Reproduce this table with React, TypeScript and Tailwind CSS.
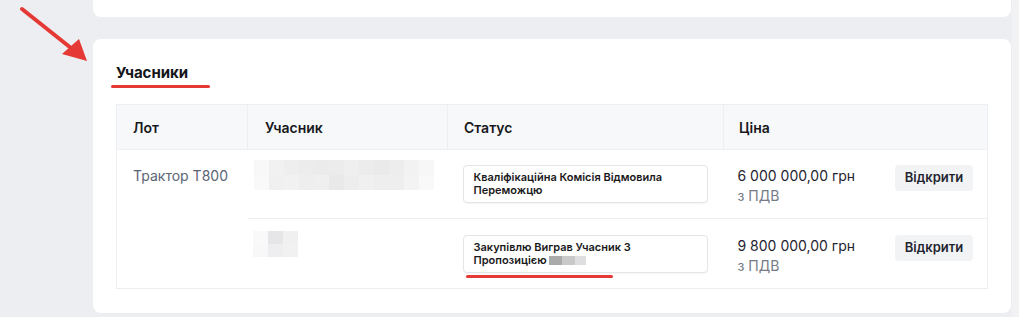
import React from "react";

const blurRow1 = [
  ["#f8f8f8", "#f1f1f2", "#eeeeef", "#ececed", "#ebebec", "#ececed", "#efeff0", "#ececed", "#eaeaeb", "#ededee", "#f2f2f3", "#f7f7f7"],
  ["#f9f9f9", "#f0f0f1", "#f1f1f2", "#eeeeef", "#efeff0", "#e9e9ea", "#ededee", "#f0f0f1", "#eeeeef", "#eeeeef", "#f3f3f4", "#f9f9f9"],
];

const blurRow2 = [
  ["#f9f9f9", "#e6e6e8", "#f0f0f1"],
  ["#f8f8f8", "#eeeef0", "#f1f1f2"],
];

function Pixels({ grid, cell, h }: { grid: string[][]; cell: number; h: number }) {
  return (
    <div className="flex flex-col">
      {grid.map((row, i) => (
        <div key={i} className="flex">
          {row.map((c, j) => (
            <div key={j} style={{ background: c, width: cell, height: h }} />
          ))}
        </div>
      ))}
    </div>
  );
}

function Arrow() {
  return (
    <svg width="93" height="70" viewBox="0 0 93 70" className="block">
      <line x1="22" y1="9" x2="76" y2="52" stroke="#e53935" strokeWidth="4" strokeLinecap="round" />
      <polygon points="87,61 62,54 79,39" fill="#e53935" />
    </svg>
  );
}

function StatusBox({ children }: { children: React.ReactNode }) {
  return (
    <div className="w-[245px] rounded-[4px] border border-[#e3e5e9] bg-white px-[10px] py-[5px] text-[11px] font-semibold leading-[13px] text-[#1a1a1a] shadow-[0_1px_1px_rgba(0,0,0,0.04)]">
      {children}
    </div>
  );
}

function Price({ value }: { value: string }) {
  return (
    <div className="flex items-start justify-between pt-[4px]">
      <div className="leading-[20px]">
        <div className="text-[14px] text-[#1f2430]">{value}</div>
        <div className="text-[14px] text-[#767b85]">з ПДВ</div>
      </div>
      <button className="mt-[-1px] h-[26px] w-[78px] rounded-[4px] bg-[#f2f3f5] text-[13px] font-semibold text-[#1f2430]">
        Відкрити
      </button>
    </div>
  );
}

export default function App() {
  return (
    <div className="flex h-[317px] w-[1019px] overflow-hidden bg-[#edeef1] font-['Inter',sans-serif]">
      <div className="w-[93px] shrink-0">
        <Arrow />
      </div>
      <div className="flex w-[918px] shrink-0 flex-col gap-[22px]">
        <div className="h-[17px] rounded-b-lg bg-white" />
        <div className="h-[274px] rounded-lg bg-white pl-[23px] pr-[24px] pt-[22px]">
          <h2 className="text-[15px] font-bold leading-[24px] text-[#14161a]">Учасники</h2>
          <div className="ml-[-5px] h-[3px] w-[99px] rounded-full bg-[#e53935]" />
          <table className="mt-[16px] w-[871px] table-fixed border-collapse border border-[#eceef1] text-left">
            <colgroup>
              <col className="w-[131px]" />
              <col className="w-[200px]" />
              <col className="w-[276px]" />
              <col className="w-[264px]" />
            </colgroup>
            <thead>
              <tr className="h-[45px] bg-[#f7f8fa] text-[14px] font-semibold text-[#17191d]">
                <th className="border-r border-[#eceef1] pl-[16px] font-semibold">Лот</th>
                <th className="border-r border-[#eceef1] pl-[17px] font-semibold">Учасник</th>
                <th className="border-r border-[#eceef1] pl-[16px] font-semibold">Статус</th>
                <th className="pl-[15px] font-semibold">Ціна</th>
              </tr>
            </thead>
            <tbody>
              <tr className="h-[69px] border-t border-[#eceef1]">
                <td rowSpan={2} className="align-top pl-[16px] pt-[16px] text-[14px] leading-[20px] text-[#5b6474]">
                  Трактор Т800
                </td>
                <td className="align-top pl-[6px] pt-[10px]">
                  <Pixels grid={blurRow1} cell={15} h={15} />
                </td>
                <td className="pl-[15px] align-middle">
                  <StatusBox>
                    Кваліфікаційна Комісія Відмовила
                    <br />
                    Переможцю
                  </StatusBox>
                </td>
                <td className="pl-[14px] pr-[14px] align-middle">
                  <Price value="6 000 000,00 грн" />
                </td>
              </tr>
              <tr className="h-[70px] border-t border-[#eceef1]">
                <td className="align-top pl-[5px] pt-[12px]">
                  <Pixels grid={blurRow2} cell={15} h={13} />
                </td>
                <td className="pl-[15px] pt-[16px] align-top">
                  <StatusBox>
                    Закупівлю Виграв Учасник З
                    <br />
                    Пропозицією{" "}
                    <span className="inline-flex align-[-1px]">
                      <span className="inline-block h-[9px] w-[13px] bg-[#aaaaab]" />
                      <span className="inline-block h-[9px] w-[13px] bg-[#c9c9ca]" />
                      <span className="inline-block h-[9px] w-[11px] bg-[#dedee0]" />
                    </span>
                  </StatusBox>
                  <div className="ml-[3px] mt-[2px] h-[3px] w-[147px] rounded-full bg-[#e53935]" />
                </td>
                <td className="pl-[14px] pr-[14px] align-middle">
                  <Price value="9 800 000,00 грн" />
                </td>
              </tr>
            </tbody>
          </table>
        </div>
      </div>
      <div className="ml-[1px] w-[7px] shrink-0 bg-[#f2f2f4]" />
    </div>
  );
}
